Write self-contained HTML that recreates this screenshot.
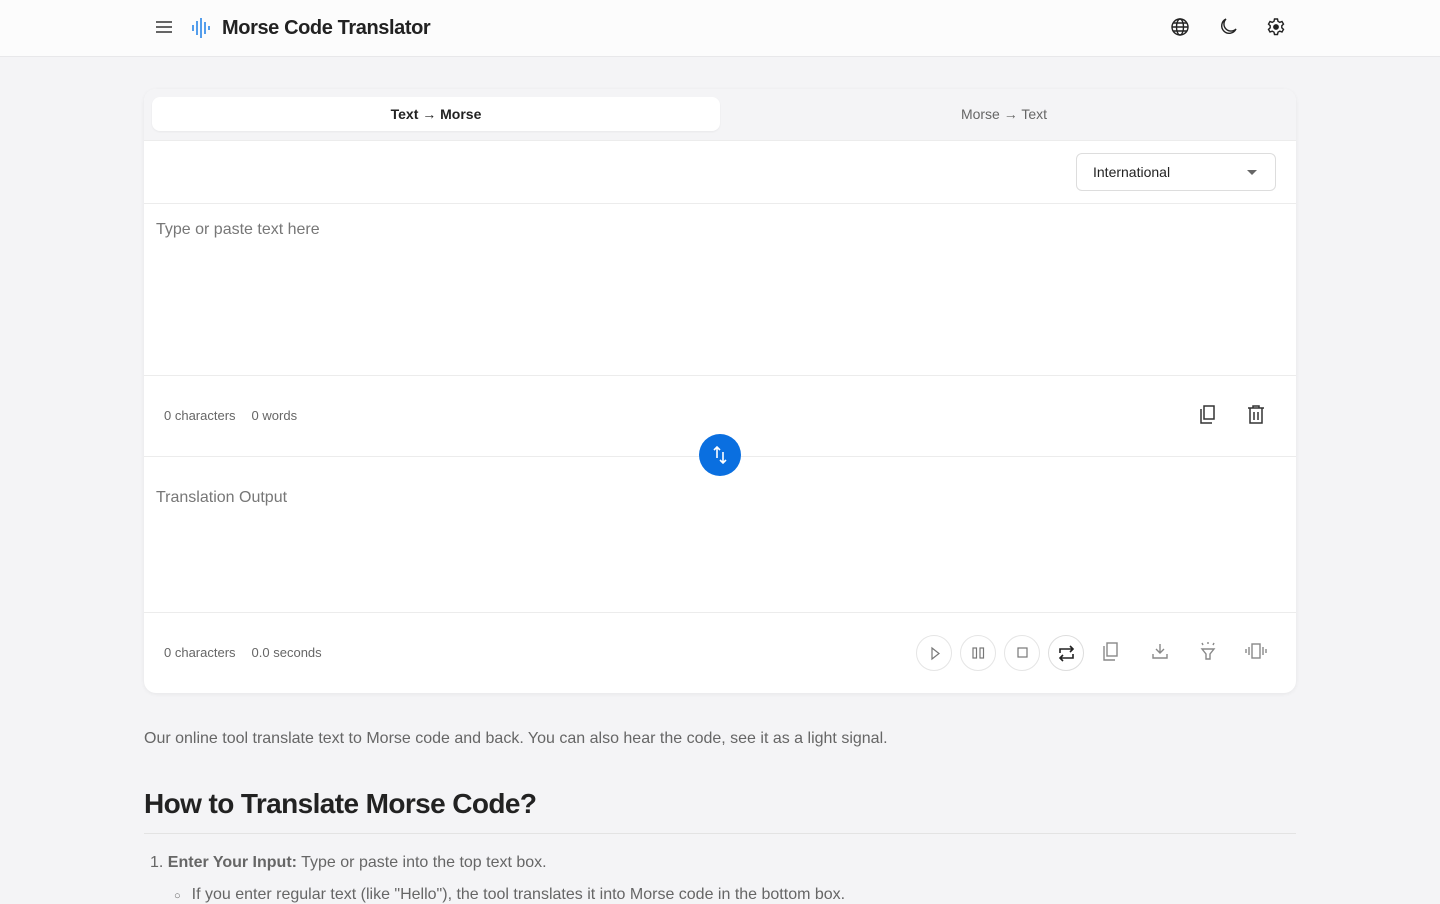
<!DOCTYPE html>
<html><head><meta charset="utf-8"><style>
*{box-sizing:border-box;margin:0;padding:0}
body{width:1440px;height:900px;overflow:hidden;background:#f4f4f6;font-family:"Liberation Sans",sans-serif;color:#222}
.hdr{height:57px;background:#fcfcfc;border-bottom:1px solid #e8e8ea;position:relative}
.hdr .t{position:absolute;left:222px;top:17px;font-size:20px;font-weight:bold;color:#222;letter-spacing:-0.4px}
.ic{position:absolute}
.card{position:absolute;left:144px;top:89px;width:1152px;height:604px;background:#fff;border-radius:12px;box-shadow:0 1px 4px rgba(0,0,0,.06);overflow:hidden}
.tabs{height:52px;background:#f4f4f6;border-bottom:1px solid #ececec;position:relative}
.tab{position:absolute;top:8px;height:34px;width:568px;text-align:center;line-height:34px;font-size:14px}
.tab.a{left:8px;background:#fff;border-radius:8px;font-weight:bold;color:#222;box-shadow:0 1px 2px rgba(0,0,0,.05)}
.tab.b{left:576px;color:#666}
.row{position:absolute;left:0;width:1152px;border-bottom:1px solid #ececec}
.sel{position:absolute;right:20px;top:12px;width:200px;height:38px;border:1px solid #ddd;border-radius:6px;font-size:14px;line-height:36px;padding-left:16px;color:#222}
.sel:after{content:"";position:absolute;right:18px;top:16px;border:5px solid transparent;border-top:5px solid #666}
.ph{position:absolute;left:12px;font-size:16px;color:#777}
.st{position:absolute;left:20px;font-size:13px;color:#666}
.st span{margin-right:16px}
.cb{position:absolute;width:36px;height:36px;border:1px solid #e5e5e5;border-radius:50%;top:22px}
.swap{position:absolute;left:699px;top:434px;width:42px;height:42px;border-radius:50%;background:#0a6fe0}
.txt{position:absolute;left:144px;font-size:16px;color:#666}
h2{position:absolute;left:144px;top:788px;font-size:28px;font-weight:bold;color:#222;letter-spacing:-0.6px}
.hr{position:absolute;left:144px;top:833px;width:1152px;height:1px;background:#e3e3e3}
</style></head><body>
<div class="hdr">
<svg class="ic" style="left:155px;top:19px" width="18" height="16" viewBox="0 0 18 16"><path d="M1 3h16M1 8h16M1 13h16" stroke="#333" stroke-width="1.5"/></svg>
<svg class="ic" style="left:192px;top:17px" width="20" height="22" viewBox="0 0 20 22"><path d="M1 8v6M5 4v14M9 1v20M13 5v12M17 9v4" stroke="#2b86e8" stroke-width="1.6"/></svg>
<div class="t">Morse Code Translator</div>
<svg class="ic" style="left:1170px;top:17px" width="20" height="20" viewBox="0 0 20 20" fill="none" stroke="#222" stroke-width="1.4"><circle cx="10" cy="10" r="8"/><ellipse cx="10" cy="10" rx="3.5" ry="8"/><path d="M2 10h16M3.5 6h13M3.5 14h13"/></svg>
<svg class="ic" style="left:1218px;top:17px" width="20" height="20" viewBox="0 0 20 20" fill="none" stroke="#222" stroke-width="1.4"><path d="M8 2a7.5 7.5 0 1 0 10 10A6.5 6.5 0 0 1 8 2z"/></svg>
<svg class="ic" style="left:1266px;top:17px" width="20" height="20" viewBox="0 0 20 20" fill="none" stroke="#222" stroke-width="1.4"><path d="M8.5 2h3l.5 2.3 1.8 1 2.2-.8 1.5 2.6-1.7 1.6v2.1l1.7 1.6-1.5 2.6-2.2-.8-1.8 1-.5 2.3h-3l-.5-2.3-1.8-1-2.2.8-1.5-2.6 1.7-1.6V8.7L2.5 7.1 4 4.5l2.2.8 1.8-1z"/><circle cx="10" cy="10" r="2.2" fill="#222"/></svg>
</div>
<div class="card">
<div class="tabs"><div class="tab a" style="line-height:35px">Text → Morse</div><div class="tab b" style="line-height:35px">Morse → Text</div></div>
<div class="row" style="top:52px;height:63px"><div class="sel">International</div></div>
<div class="row" style="top:115px;height:172px"><div class="ph" style="top:17px">Type or paste text here</div></div>
<div class="row" style="top:287px;height:81px"><div class="st" style="top:32px"><span>0 characters</span><span>0 words</span></div>
<svg class="ic" style="left:1055px;top:29px" width="18" height="20" viewBox="0 0 18 20" fill="none" stroke="#333" stroke-width="1.5"><rect x="5" y="1" width="10" height="13"/><path d="M2 4v14h11"/></svg>
<svg class="ic" style="left:1103px;top:29px" width="18" height="20" viewBox="0 0 18 20" fill="none" stroke="#333" stroke-width="1.5"><path d="M1 3h16M6 3V1h6v2M3 3v15h12V3M7 7v8M11 7v8"/></svg>
</div>
<div class="row" style="top:368px;height:156px"><div class="ph" style="top:32px">Translation Output</div></div>
<div class="row" style="top:524px;height:80px;border:none"><div class="st" style="top:32px"><span>0 characters</span><span>0.0 seconds</span></div>
<div class="cb" style="left:772px"><svg width="36" height="36"><path d="M15 12l7 5.5-7 5.5z" fill="none" stroke="#777" stroke-width="1.2"/></svg></div>
<div class="cb" style="left:816px"><svg width="36" height="36"><rect x="12" y="12" width="3.5" height="10" fill="none" stroke="#777" stroke-width="1.2"/><rect x="19" y="12" width="3.5" height="10" fill="none" stroke="#777" stroke-width="1.2"/></svg></div>
<div class="cb" style="left:860px"><svg width="36" height="36"><rect x="13" y="12" width="9" height="9" fill="none" stroke="#777" stroke-width="1.2"/></svg></div>
<div class="cb" style="left:904px;border-color:#ddd"><svg width="36" height="36" fill="none" stroke="#222" stroke-width="1.6"><path d="M11 17v-4h13M21 10l3 3-3 3M24 18v4H11M14 25l-3-3 3-3"/></svg></div>
<svg class="ic" style="left:958px;top:29px" width="18" height="20" viewBox="0 0 18 20" fill="none" stroke="#888" stroke-width="1.4"><rect x="5" y="1" width="10" height="13"/><path d="M2 4v14h11"/></svg>
<svg class="ic" style="left:1007px;top:29px" width="18" height="18" viewBox="0 0 18 18" fill="none" stroke="#888" stroke-width="1.4"><path d="M9 2v9M5 7l4 4 4-4M2 12v4h14v-4"/></svg>
<svg class="ic" style="left:1055px;top:28px" width="18" height="20" viewBox="0 0 18 20" fill="none" stroke="#888" stroke-width="1.4"><path d="M3 8h12l-4 5v5H7v-5zM9 1v2M3 2l1 2M15 2l-1 2"/></svg>
<svg class="ic" style="left:1101px;top:29px" width="22" height="18" viewBox="0 0 22 18" fill="none" stroke="#888" stroke-width="1.4"><rect x="7" y="2" width="8" height="14"/><path d="M4 5v8M1 7v4M18 5v8M21 7v4"/></svg>
</div>
</div>
<div class="swap"><svg width="42" height="42" fill="none" stroke="#fff" stroke-width="1.6"><path d="M18 24V13M15 16l3-3 3 3M24 18v11M21 26l3 3 3-3"/></svg></div>
<div class="txt" style="top:730px">Our online tool translate text to Morse code and back. You can also hear the code, see it as a light signal.</div>
<h2>How to Translate Morse Code?</h2>
<div class="hr"></div>
<div class="txt" style="top:854px;left:150px">1. <b>Enter Your Input:</b> Type or paste into the top text box.</div>
<div class="txt" style="top:886px;left:174px"><span style="font-size:11px;margin-right:11px">○</span>If you enter regular text (like "Hello"), the tool translates it into Morse code in the bottom box.</div>
</body></html>
